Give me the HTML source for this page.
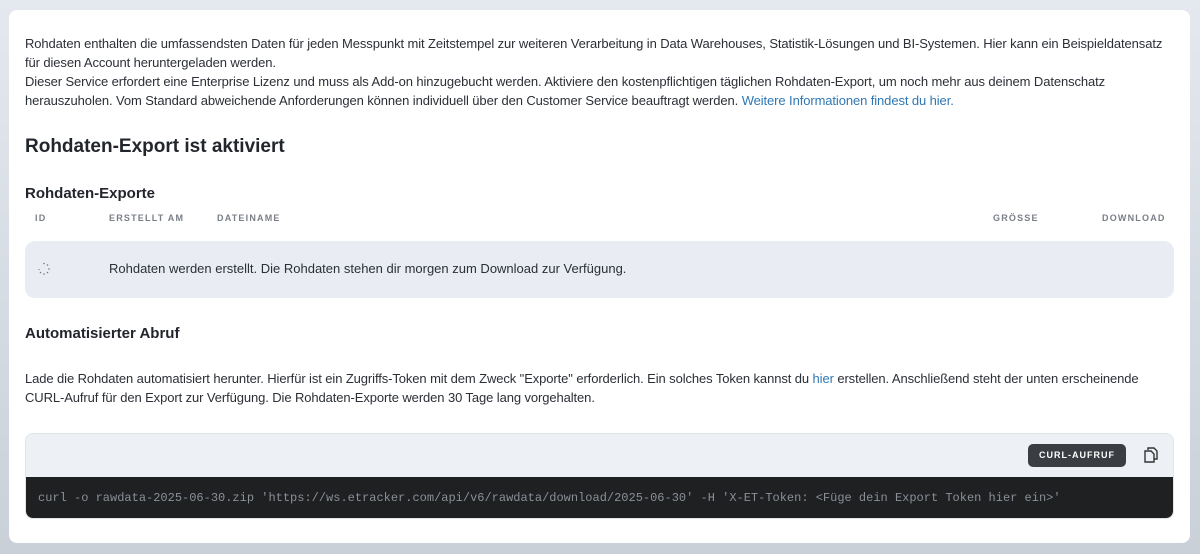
<!DOCTYPE html>
<html><head><meta charset="utf-8"><style>
*{box-sizing:border-box;margin:0;padding:0}
body{width:1200px;height:554px;overflow:hidden;background:linear-gradient(180deg,#e4e9ef,#c9d0d8);font-family:"Liberation Sans",sans-serif;color:#2b2f36;position:relative}
.card{position:absolute;left:9px;top:10px;width:1181px;height:533px;background:#fff;border-radius:8px}
.p{position:absolute;left:16px;font-size:13px;line-height:19px;width:1150px;letter-spacing:-0.1px}
a{color:#2f77b5;text-decoration:none}
h2{position:absolute;left:16px;top:126px;font-size:19px;font-weight:bold;color:#22262c}
h3{position:absolute;left:16px;font-size:15px;font-weight:bold;color:#22262c}
.th{position:absolute;top:203px;font-size:9px;letter-spacing:1.2px;color:#7a7f87;font-weight:bold}
.row{position:absolute;left:16px;top:231px;width:1149px;height:57px;background:#e9edf3;border-radius:10px}
.code{position:absolute;left:16px;top:423px;width:1149px;height:86px;border-radius:8px;border:1px solid #e1e5ea;background:#edf0f5;overflow:hidden}
.dark{position:absolute;left:0;top:43px;width:100%;height:43px;background:#1f2022}
.mono{position:absolute;left:12px;top:14px;font-family:"Liberation Mono",monospace;font-size:12px;color:#8a8f98;white-space:nowrap}
.btn{position:absolute;left:1002px;top:10px;width:98px;height:23px;border-radius:5px;background:#3a3d42;color:#fff;font-size:9px;font-weight:bold;letter-spacing:1px;text-align:center;line-height:23px}
</style></head><body>
<div class="card">
<div class="p" style="top:24px">Rohdaten enthalten die umfassendsten Daten für jeden Messpunkt mit Zeitstempel zur weiteren Verarbeitung in Data Warehouses, Statistik-Lösungen und BI-Systemen. Hier kann ein Beispieldatensatz für diesen Account heruntergeladen werden.<br>Dieser Service erfordert eine Enterprise Lizenz und muss als Add-on hinzugebucht werden. Aktiviere den kostenpflichtigen täglichen Rohdaten-Export, um noch mehr aus deinem Datenschatz herauszuholen. Vom Standard abweichende Anforderungen können individuell über den Customer Service beauftragt werden. <a>Weitere Informationen findest du hier.</a></div>
<h2>Rohdaten-Export ist aktiviert</h2>
<h3 style="top:175px">Rohdaten-Exporte</h3>
<div class="th" style="left:26px">ID</div>
<div class="th" style="left:100px">ERSTELLT AM</div>
<div class="th" style="left:208px">DATEINAME</div>
<div class="th" style="left:984px">GRÖSSE</div>
<div class="th" style="left:1093px">DOWNLOAD</div>
<div class="row">
<svg style="position:absolute;left:12px;top:21px" width="14" height="14" viewBox="0 0 14 14"><g fill="#777"><circle cx="7" cy="1.5" r=".8"/><circle cx="10.5" cy="3" r=".8"/><circle cx="12" cy="7" r=".8"/><circle cx="10.5" cy="10.5" r=".8"/><circle cx="7" cy="12" r=".8"/><circle cx="3.5" cy="10.5" r=".8"/><circle cx="2" cy="7.5" r=".6"/></g></svg>
<div style="position:absolute;left:84px;top:20px;font-size:13px;color:#2b2f36">Rohdaten werden erstellt. Die Rohdaten stehen dir morgen zum Download zur Verfügung.</div>
</div>
<h3 style="top:315px">Automatisierter Abruf</h3>
<div class="p" style="top:359px">Lade die Rohdaten automatisiert herunter. Hierfür ist ein Zugriffs-Token mit dem Zweck "Exporte" erforderlich. Ein solches Token kannst du <a>hier</a> erstellen. Anschließend steht der unten erscheinende CURL-Aufruf für den Export zur Verfügung. Die Rohdaten-Exporte werden 30 Tage lang vorgehalten.</div>
<div class="code">
<div class="btn">CURL-AUFRUF</div>
<svg style="position:absolute;left:1117px;top:12px" width="16" height="18" viewBox="0 0 16 18" fill="none" stroke="#333" stroke-width="1.4"><path d="M5 4V2h6l3 3v8h-3"/><path d="M2 5h6l3 3v8H2z"/></svg>
<div class="dark"><div class="mono">curl -o rawdata-2025-06-30.zip 'https://ws.etracker.com/api/v6/rawdata/download/2025-06-30' -H 'X-ET-Token: &lt;Füge dein Export Token hier ein&gt;'</div></div>
</div>
</div>
</body></html>
